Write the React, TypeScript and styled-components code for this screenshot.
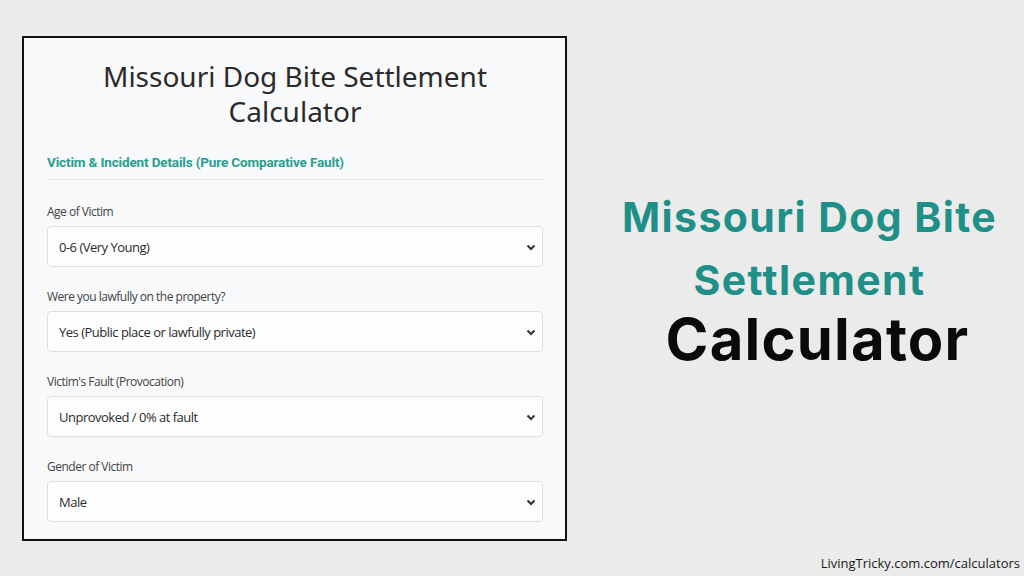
import React from "react";
import styled, { createGlobalStyle } from "styled-components";

const Global = createGlobalStyle`
  html, body { margin: 0; padding: 0; }
  body { background: #ebebeb; width: 1024px; height: 576px; overflow: hidden; }
  * { box-sizing: border-box; }
`;

const Page = styled.div`
  width: 1024px;
  height: 576px;
  display: grid;
  grid-template-columns: 545px 1fr;
  padding: 36px 0 0 22px;
  position: relative;
  font-family: "Open Sans", "Noto Sans", sans-serif;
`;

const Card = styled.div`
  width: 545px;
  height: 505px;
  border: 2px solid #111;
  background: #f8f9fa;
  padding: 21px 22px 0 23px;
  display: flex;
  flex-direction: column;
`;

const Title = styled.h1`
  margin: 0;
  font-family: "Noto Sans", "Open Sans", sans-serif;
  font-weight: 400;
  font-size: 28px;
  line-height: 35px;
  text-align: center;
  color: #2b2b2b;
`;

const Section = styled.h2`
  margin: 24px 0 0 0;
  padding-bottom: 8px;
  font-family: "Roboto", sans-serif;
  font-weight: 700;
  font-size: 13.5px;
  line-height: 18px;
  letter-spacing: -0.15px;
  color: #2a9d8f;
  border-bottom: 1px solid #e6e8ea;
`;

const Fields = styled.div`
  display: flex;
  flex-direction: column;
  gap: 21px;
  margin-top: 23px;
`;

const Field = styled.div`
  display: flex;
  flex-direction: column;
  gap: 5px;
`;

const Label = styled.label`
  font-family: "Open Sans", "Noto Sans", sans-serif;
  font-size: 12px;
  line-height: 18px;
  color: #444;
  letter-spacing: -0.5px;
`;

const SelectBox = styled.div`
  height: 41px;
  border: 1px solid #dcdfe2;
  border-radius: 4px;
  background: #fdfdfd;
  display: flex;
  align-items: center;
  justify-content: space-between;
  padding: 0 6px 0 11px;
  font-family: "Open Sans", "Noto Sans", sans-serif;
  font-size: 13px;
  color: #2b2b2b;
  letter-spacing: -0.5px;
`;

const Chevron = () => (
  <svg width="10" height="8" viewBox="0 0 10 8">
    <path d="M1.5 2.5 L5 6 L8.5 2.5" fill="none" stroke="#333" strokeWidth="2" />
  </svg>
);

const Side = styled.div`
  display: flex;
  flex-direction: column;
  align-items: center;
  padding-top: 150px;
  padding-left: 28px;
`;

const Headline = styled.div`
  font-family: "Inter", "Lato", sans-serif;
  font-weight: 700;
  font-size: 41px;
  line-height: 63px;
  color: #1f9088;
  text-align: center;
  letter-spacing: 1.4px;
`;

const Big = styled.div`
  font-family: "Inter", "Lato", sans-serif;
  font-weight: 700;
  font-size: 58px;
  line-height: 72px;
  color: #0a0a0a;
  margin-top: -9px;
  margin-left: 16px;
  letter-spacing: 1.2px;
`;

const Footer = styled.div`
  position: absolute;
  right: 4px;
  bottom: 4px;
  font-family: "Open Sans", "Noto Sans", sans-serif;
  font-size: 13px;
  color: #1a1a1a;
`;

const fields = [
  { label: "Age of Victim", value: "0-6 (Very Young)" },
  { label: "Were you lawfully on the property?", value: "Yes (Public place or lawfully private)" },
  { label: "Victim's Fault (Provocation)", value: "Unprovoked / 0% at fault" },
  { label: "Gender of Victim", value: "Male" },
];

export default function App() {
  return (
    <>
      <Global />
      <Page>
        <Card>
          <Title>
            Missouri Dog Bite Settlement
            <br />
            Calculator
          </Title>
          <Section>Victim &amp; Incident Details (Pure Comparative Fault)</Section>
          <Fields>
            {fields.map((f) => (
              <Field key={f.label}>
                <Label>{f.label}</Label>
                <SelectBox>
                  <span>{f.value}</span>
                  <Chevron />
                </SelectBox>
              </Field>
            ))}
          </Fields>
        </Card>
        <Side>
          <Headline>
            Missouri Dog Bite
            <br />
            Settlement
          </Headline>
          <Big>Calculator</Big>
        </Side>
        <Footer>LivingTricky.com.com/calculators</Footer>
      </Page>
    </>
  );
}
